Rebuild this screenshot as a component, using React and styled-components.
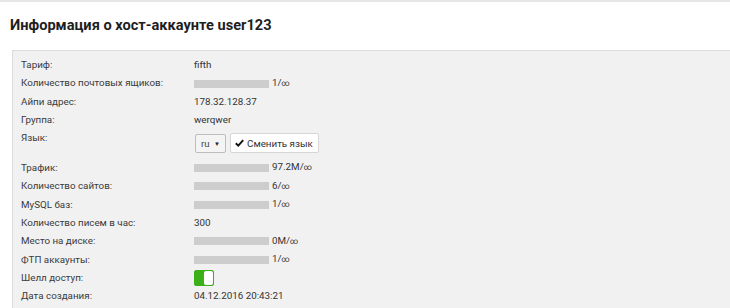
import React from 'react';
import styled, { createGlobalStyle } from 'styled-components';

const GlobalStyle = createGlobalStyle`
    body {
        margin: 0;
        background: #ffffff;
        font-family: Roboto, "Liberation Sans", sans-serif;
        color: #333333;
    }
`;

const Page = styled.div`
    border-top: 2px solid #e6e6e6;
    height: 306px;
    overflow: hidden;
`;

const Title = styled.h1`
    margin: 0;
    padding: 14px 10px 0 10px;
    height: 34px;
    font-size: 14.6px;
    font-weight: 700;
    color: #1e1e1e;
    line-height: 18px;
`;

const Panel = styled.div`
    margin-left: 12px;
    background: #f1f1f1;
    border: 1px solid #dcdcdc;
    border-right: none;
    padding: 5px 0 10px 8px;
    display: grid;
    grid-template-columns: 173px 1fr;
    font-size: 9.8px;
    line-height: 18.35px;
`;

const Label = styled.div`
    color: #3a3a3a;
    height: ${(p) => (p.$tall ? '29.5px' : '18.35px')};
`;

const Value = styled.div`
    display: flex;
    align-items: ${(p) => (p.$tall ? 'flex-start' : 'center')};
    padding-top: ${(p) => (p.$tall ? '5px' : '0')};
    box-sizing: border-box;
    gap: 3px;
    height: ${(p) => (p.$tall ? '29.5px' : '18.35px')};
    color: #333333;
`;

const Bar = styled.div`
    width: 75px;
    height: 8px;
    background: #cdcdcd;
`;

const Infinity = styled.span`
    font-size: 8px;
`;

const Select = styled.div`
    display: flex;
    align-items: center;
    justify-content: space-between;
    box-sizing: border-box;
    width: 31px;
    height: 19px;
    padding: 0 5px 0 5px;
    margin-left: 1px;
    background: #f4f4f4;
    border: 1px solid #bdbdbd;
    border-radius: 2px;
    font-size: 9.5px;
    color: #444;
`;

const Caret = styled.span`
    font-size: 6px;
    color: #222;
`;

const Button = styled.button`
    display: flex;
    align-items: center;
    gap: 3px;
    box-sizing: border-box;
    height: 20px;
    margin-left: 1px;
    margin-top: -1px;
    padding: 0 5px 0 4px;
    background: #ffffff;
    border: 1px solid #d6d6d6;
    border-radius: 2px;
    font-family: inherit;
    font-size: 9.8px;
    color: #333;
`;

const Toggle = styled.div`
    box-sizing: border-box;
    width: 20px;
    height: 16px;
    background: #3cb018;
    border: 1px solid #3cb018;
    border-radius: 2px;
    display: flex;
    justify-content: flex-end;
`;

const Knob = styled.div`
    width: 9px;
    height: 100%;
    background: #ffffff;
    border-radius: 2px;
`;

const Check = () => (
    <svg width="9" height="8" viewBox="0 0 9 8">
        <path d="M0.8 4.2 L3.3 6.6 L8.2 1.2" fill="none" stroke="#111" strokeWidth="1.9" />
    </svg>
);

const rows = [
    { label: 'Тариф:', value: 'fifth' },
    { label: 'Количество почтовых ящиков:', bar: '1/' },
    { label: 'Айпи адрес:', value: '178.32.128.37' },
    { label: 'Группа:', value: 'werqwer' },
    { label: 'Язык:', lang: true },
    { label: 'Трафик:', bar: '97.2M/' },
    { label: 'Количество сайтов:', bar: '6/' },
    { label: 'MySQL баз:', bar: '1/' },
    { label: 'Количество писем в час:', value: '300' },
    { label: 'Место на диске:', bar: '0M/' },
    { label: 'ФТП аккаунты:', bar: '1/' },
    { label: 'Шелл доступ:', toggle: true },
    { label: 'Дата создания:', value: '04.12.2016 20:43:21' },
];

const App = () => {
    return (
        <>
            <GlobalStyle />
            <Page>
                <Title>Информация о хост-аккаунте user123</Title>
                <Panel>
                    {rows.map((row) => (
                        <React.Fragment key={row.label}>
                            <Label $tall={row.lang}>{row.label}</Label>
                            <Value $tall={row.lang}>
                                {row.bar && (
                                    <>
                                        <Bar />
                                        <span>{row.bar}<Infinity>∞</Infinity></span>
                                    </>
                                )}
                                {row.lang && (
                                    <>
                                        <Select>ru <Caret>▼</Caret></Select>
                                        <Button><Check />Сменить язык</Button>
                                    </>
                                )}
                                {row.toggle && <Toggle><Knob /></Toggle>}
                                {row.value && <span>{row.value}</span>}
                            </Value>
                        </React.Fragment>
                    ))}
                </Panel>
            </Page>
        </>
    );
};

export default App;
